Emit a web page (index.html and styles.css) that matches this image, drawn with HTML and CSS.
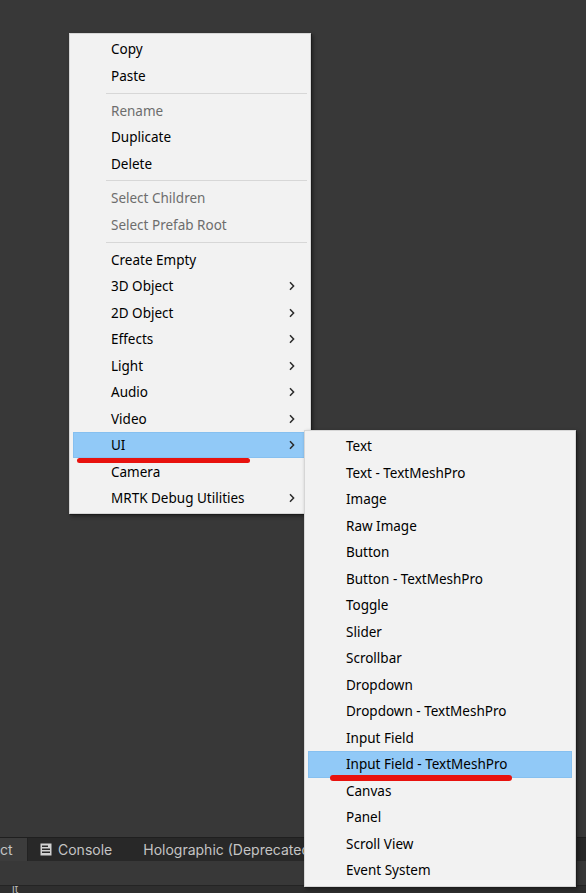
FILE: index.html
```html
<!DOCTYPE html>
<html>
<head>
<meta charset="utf-8">
<link rel="stylesheet" href="styles.css">
</head>
<body>
<div class="editor">
  <div class="scene"></div>
  <div class="tabbar">
    <div class="tab tab-active"><span class="tab-cut">ct</span></div>
    <div class="tab">
      <svg class="tab-icon" width="12" height="13" viewBox="0 0 12 13"><rect x="0.5" y="0.5" width="11" height="12" fill="#d2d2d2"/><rect x="2" y="2.5" width="6" height="1.5" fill="#2a2a2a"/><rect x="2" y="5.5" width="8" height="1.5" fill="#2a2a2a"/><rect x="2" y="8.5" width="8" height="1.5" fill="#2a2a2a"/></svg>
      <span>Console</span>
    </div>
    <div class="tab tab-wide"><span>Holographic (Deprecated)</span></div>
  </div>
  <div class="toolbar"></div>
  <div class="bottom"><span class="bottom-text">lt</span></div>
</div>

<div class="menu main-menu">
  <div class="item">Copy</div>
  <div class="item">Paste</div>
  <div class="sep"></div>
  <div class="item disabled">Rename</div>
  <div class="item">Duplicate</div>
  <div class="item">Delete</div>
  <div class="sep"></div>
  <div class="item disabled">Select Children</div>
  <div class="item disabled">Select Prefab Root</div>
  <div class="sep"></div>
  <div class="item">Create Empty</div>
  <div class="item sub">3D Object<svg class="arrow" width="6" height="10" viewBox="0 0 6 10"><path d="M1 1.2 L4.6 5 L1 8.8" fill="none" stroke="#2b2b2b" stroke-width="1.5"/></svg></div>
  <div class="item sub">2D Object<svg class="arrow" width="6" height="10" viewBox="0 0 6 10"><path d="M1 1.2 L4.6 5 L1 8.8" fill="none" stroke="#2b2b2b" stroke-width="1.5"/></svg></div>
  <div class="item sub">Effects<svg class="arrow" width="6" height="10" viewBox="0 0 6 10"><path d="M1 1.2 L4.6 5 L1 8.8" fill="none" stroke="#2b2b2b" stroke-width="1.5"/></svg></div>
  <div class="item sub">Light<svg class="arrow" width="6" height="10" viewBox="0 0 6 10"><path d="M1 1.2 L4.6 5 L1 8.8" fill="none" stroke="#2b2b2b" stroke-width="1.5"/></svg></div>
  <div class="item sub">Audio<svg class="arrow" width="6" height="10" viewBox="0 0 6 10"><path d="M1 1.2 L4.6 5 L1 8.8" fill="none" stroke="#2b2b2b" stroke-width="1.5"/></svg></div>
  <div class="item sub">Video<svg class="arrow" width="6" height="10" viewBox="0 0 6 10"><path d="M1 1.2 L4.6 5 L1 8.8" fill="none" stroke="#2b2b2b" stroke-width="1.5"/></svg></div>
  <div class="item sub hot">UI<svg class="arrow" width="6" height="10" viewBox="0 0 6 10"><path d="M1 1.2 L4.6 5 L1 8.8" fill="none" stroke="#2b2b2b" stroke-width="1.5"/></svg><span class="mark mark-ui"></span></div>
  <div class="item">Camera</div>
  <div class="item sub">MRTK Debug Utilities<svg class="arrow" width="6" height="10" viewBox="0 0 6 10"><path d="M1 1.2 L4.6 5 L1 8.8" fill="none" stroke="#2b2b2b" stroke-width="1.5"/></svg></div>
</div>

<div class="menu sub-menu">
  <div class="item">Text</div>
  <div class="item">Text - TextMeshPro</div>
  <div class="item">Image</div>
  <div class="item">Raw Image</div>
  <div class="item">Button</div>
  <div class="item">Button - TextMeshPro</div>
  <div class="item">Toggle</div>
  <div class="item">Slider</div>
  <div class="item">Scrollbar</div>
  <div class="item">Dropdown</div>
  <div class="item">Dropdown - TextMeshPro</div>
  <div class="item">Input Field</div>
  <div class="item hot">Input Field - TextMeshPro<span class="mark mark-input"></span></div>
  <div class="item">Canvas</div>
  <div class="item">Panel</div>
  <div class="item">Scroll View</div>
  <div class="item">Event System</div>
</div>
</body>
</html>
```
FILE: styles.css
```css
html, body {
  margin: 0;
  padding: 0;
}
body {
  width: 586px;
  height: 893px;
  overflow: hidden;
  position: relative;
  background: #383838;
  font-family: "Noto Sans", "Open Sans", sans-serif;
}
.editor {
  display: flex;
  flex-direction: column;
  height: 893px;
}
.scene {
  height: 837px;
  flex: none;
  background: #383838;
  border-bottom: 1px solid #1f1f1f;
}
.tabbar {
  height: 23px;
  flex: none;
  background: #282828;
  display: flex;
  align-items: stretch;
  font-family: Inter, "Noto Sans", sans-serif;
  font-size: 14px;
  color: #c4c4c4;
  white-space: nowrap;
  overflow: hidden;
}
.tab {
  display: flex;
  align-items: center;
  padding: 0 14px 0 12px;
  gap: 6px;
}
.tab-active {
  background: #3c3c3c;
  width: 27px;
  padding: 0;
  border-right: 1px solid #222;
  justify-content: flex-start;
}
.tab-cut {
  margin-left: 0;
}
.tab-wide {
  padding-left: 17px;
}
.tab-icon {
  margin-top: -1px;
}
.toolbar {
  height: 24px;
  flex: none;
  background: #383838;
  border-bottom: 1px solid #242424;
}
.bottom {
  flex: 1;
  background: #2e2e2e;
  font-family: Inter, sans-serif;
  font-size: 11px;
  color: #bbb;
  padding-left: 12px;
  line-height: 7px;
  overflow: hidden;
}
.bottom-text {
  display: block;
}

.menu {
  position: absolute;
  box-sizing: border-box;
  background: #f2f2f2;
  border: 1px solid #d6d6d6;
  padding: 2px 3px;
  box-shadow: 1px 1px 0 #1c1c1c, 2px 2px 4px rgba(0,0,0,0.45);
  font-size: 13.5px;
  color: #000;
}
.main-menu {
  left: 69px;
  top: 33px;
  width: 242px;
}
.sub-menu {
  left: 304px;
  top: 430px;
  width: 272px;
  z-index: 2;
}
.item {
  position: relative;
  height: 26.5px;
  box-sizing: border-box;
  display: flex;
  align-items: center;
  padding-left: 37px;
  padding-right: 11px;
  border: 1px solid transparent;
  white-space: nowrap;
}
.item.sub {
  justify-content: space-between;
}
.item.disabled {
  color: #6d6d6d;
}
.item.hot {
  background: #91c9f7;
  border-color: #86c0f0;
}
.arrow {
  display: block;
}
.sep {
  height: 8.3px;
  display: flex;
  align-items: center;
  padding-left: 33px;
}
.sep::before {
  content: "";
  display: block;
  flex: 1;
  height: 1px;
  background: #d7d7d7;
}
.mark {
  position: absolute;
  height: 5px;
  border-radius: 3px;
  background: #e8120e;
  z-index: 3;
}
.mark-ui {
  left: 3px;
  top: 25px;
  width: 173px;
}
.mark-input {
  left: 21px;
  top: 23px;
  width: 182px;
  height: 5.5px;
}
```
